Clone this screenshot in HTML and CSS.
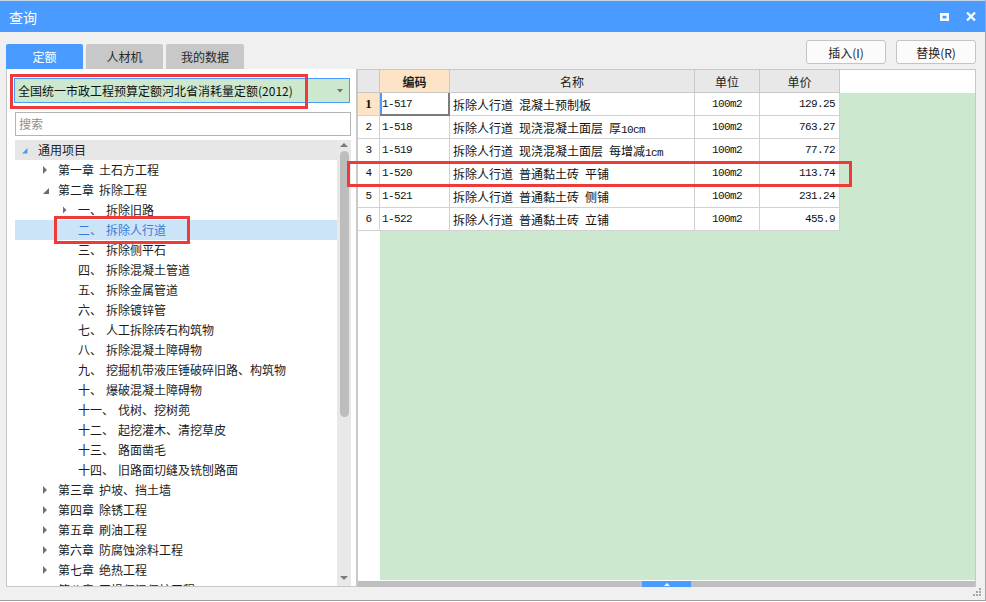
FILE: index.html
```html
<!DOCTYPE html>
<html lang="zh-CN">
<head>
<meta charset="utf-8">
<title>查询</title>
<link rel="stylesheet" href="styles.css">
</head>
<body>
<div class="window">
  <div class="titlebar">
    <span class="title">查询</span>
    <div class="title-btns">
      <svg width="9" height="8" viewBox="0 0 9 8"><path d="M0 0H9V8H0Z M2.5 2.7H6.5V5.5H2.5Z" fill="#fff" fill-rule="evenodd"/></svg>
      <svg width="10" height="9" viewBox="0 0 10 9"><path d="M1 0.5L9 8.5M9 0.5L1 8.5" stroke="#fff" stroke-width="2.2"/></svg>
    </div>
  </div>

  <div class="toolbar">
    <div class="tabs">
      <div class="tab active">定额</div>
      <div class="tab">人材机</div>
      <div class="tab wide">我的数据</div>
    </div>
    <div class="actions">
      <button class="btn">插入(I)</button>
      <button class="btn">替换(R)</button>
    </div>
  </div>

  <div class="main">
    <div class="left">
      <div class="combo">
        <span>全国统一市政工程预算定额河北省消耗量定额(2012)</span>
        <svg width="6" height="4" viewBox="0 0 6 4"><path d="M0 0H6L3 3.5Z" fill="#707070"/></svg>
      </div>
      <div class="search">搜索</div>
      <div class="tree">
        <div class="tree-list">
          <div class="node l0 root"><i class="arr"><svg width="16" height="20" viewBox="0 0 16 20"><path d="M0 13.5H5.5V8Z" fill="#4a9bff"/></svg></i>通用项目</div>
          <div class="node l1"><i class="arr"><svg width="16" height="20" viewBox="0 0 16 20"><path d="M1 6L5 10L1 14Z" fill="#727272"/></svg></i><span class="p">第一章</span>土石方工程</div>
          <div class="node l1"><i class="arr"><svg width="16" height="20" viewBox="0 0 16 20"><path d="M1 14H7V8Z" fill="#6a6a6a"/></svg></i><span class="p">第二章</span>拆除工程</div>
          <div class="node l2"><i class="arr"><svg width="16" height="20" viewBox="0 0 16 20"><path d="M1 6.5L4.5 10L1 13.5Z" fill="#727272"/></svg></i><span class="q">一、</span>拆除旧路</div>
          <div class="node l2 sel"><i class="arr"></i><span class="q">二、</span>拆除人行道</div>
          <div class="node l2"><i class="arr"></i><span class="q">三、</span>拆除侧平石</div>
          <div class="node l2"><i class="arr"></i><span class="q">四、</span>拆除混凝土管道</div>
          <div class="node l2"><i class="arr"></i><span class="q">五、</span>拆除金属管道</div>
          <div class="node l2"><i class="arr"></i><span class="q">六、</span>拆除镀锌管</div>
          <div class="node l2"><i class="arr"></i><span class="q">七、</span>人工拆除砖石构筑物</div>
          <div class="node l2"><i class="arr"></i><span class="q">八、</span>拆除混凝土障碍物</div>
          <div class="node l2"><i class="arr"></i><span class="q">九、</span>挖掘机带液压锤破碎旧路、构筑物</div>
          <div class="node l2"><i class="arr"></i><span class="q">十、</span>爆破混凝土障碍物</div>
          <div class="node l2"><i class="arr"></i><span class="q">十一、</span>伐树、挖树蔸</div>
          <div class="node l2"><i class="arr"></i><span class="q">十二、</span>起挖灌木、清挖草皮</div>
          <div class="node l2"><i class="arr"></i><span class="q">十三、</span>路面凿毛</div>
          <div class="node l2"><i class="arr"></i><span class="q">十四、</span>旧路面切缝及铣刨路面</div>
          <div class="node l1"><i class="arr"><svg width="16" height="20" viewBox="0 0 16 20"><path d="M1 6L5 10L1 14Z" fill="#727272"/></svg></i><span class="p">第三章</span>护坡、挡土墙</div>
          <div class="node l1"><i class="arr"><svg width="16" height="20" viewBox="0 0 16 20"><path d="M1 6L5 10L1 14Z" fill="#727272"/></svg></i><span class="p">第四章</span>除锈工程</div>
          <div class="node l1"><i class="arr"><svg width="16" height="20" viewBox="0 0 16 20"><path d="M1 6L5 10L1 14Z" fill="#727272"/></svg></i><span class="p">第五章</span>刷油工程</div>
          <div class="node l1"><i class="arr"><svg width="16" height="20" viewBox="0 0 16 20"><path d="M1 6L5 10L1 14Z" fill="#727272"/></svg></i><span class="p">第六章</span>防腐蚀涂料工程</div>
          <div class="node l1"><i class="arr"><svg width="16" height="20" viewBox="0 0 16 20"><path d="M1 6L5 10L1 14Z" fill="#727272"/></svg></i><span class="p">第七章</span>绝热工程</div>
          <div class="node l1"><i class="arr"><svg width="16" height="20" viewBox="0 0 16 20"><path d="M1 6L5 10L1 14Z" fill="#727272"/></svg></i><span class="p">第八章</span>王损保温保护工程</div>
        </div>
        <div class="vscroll">
          <div class="sarrow up"><svg width="8" height="4" viewBox="0 0 8 4"><path d="M0 4H8L4 0Z" fill="#7a7a7a"/></svg></div>
          <div class="vthumb"></div>
          <div class="vspace"></div>
          <div class="sarrow down"><svg width="8" height="4" viewBox="0 0 8 4"><path d="M0 0H8L4 4Z" fill="#7a7a7a"/></svg></div>
        </div>
      </div>
    </div>

    <div class="right">
      <div class="ghead">
        <div class="hc"></div>
        <div class="hc code">编码</div>
        <div class="hc">名称</div>
        <div class="hc">单位</div>
        <div class="hc">单价</div>
      </div>
      <div class="gbody">
        <div class="grow">
          <div class="c rn cur">1</div>
          <div class="c code-c focus m">1-517</div>
          <div class="c name"><span>拆除人行道&ensp;混凝土预制板</span></div>
          <div class="c unit m">100m2</div>
          <div class="c price m">129.25</div>
        </div>
        <div class="grow">
          <div class="c rn m">2</div>
          <div class="c code-c m">1-518</div>
          <div class="c name"><span>拆除人行道&ensp;现浇混凝土面层&ensp;厚<span class="m">10cm</span></span></div>
          <div class="c unit m">100m2</div>
          <div class="c price m">763.27</div>
        </div>
        <div class="grow">
          <div class="c rn m">3</div>
          <div class="c code-c m">1-519</div>
          <div class="c name"><span>拆除人行道&ensp;现浇混凝土面层&ensp;每增减<span class="m">1cm</span></span></div>
          <div class="c unit m">100m2</div>
          <div class="c price m">77.72</div>
        </div>
        <div class="grow">
          <div class="c rn m">4</div>
          <div class="c code-c m">1-520</div>
          <div class="c name"><span>拆除人行道&ensp;普通黏土砖&ensp;平铺</span></div>
          <div class="c unit m">100m2</div>
          <div class="c price m">113.74</div>
        </div>
        <div class="grow">
          <div class="c rn m">5</div>
          <div class="c code-c m">1-521</div>
          <div class="c name"><span>拆除人行道&ensp;普通黏土砖&ensp;侧铺</span></div>
          <div class="c unit m">100m2</div>
          <div class="c price m">231.24</div>
        </div>
        <div class="grow">
          <div class="c rn m">6</div>
          <div class="c code-c m">1-522</div>
          <div class="c name"><span>拆除人行道&ensp;普通黏土砖&ensp;立铺</span></div>
          <div class="c unit m">100m2</div>
          <div class="c price m">455.9</div>
        </div>
      </div>
      <div class="hgap"></div>
      <div class="hscroll">
        <div class="hthumb"><svg width="6" height="3" viewBox="0 0 6 3"><path d="M0 3H6L3 0Z" fill="#fff"/></svg></div>
      </div>
    </div>
  </div>

  <div class="mark mark-combo"></div>
  <div class="mark mark-node"></div>
  <div class="mark mark-row"></div>

  <svg class="grip" width="9" height="9" viewBox="0 0 9 9">
    <rect x="6" y="0" width="2" height="2" fill="#a6a6a6"/>
    <rect x="3" y="3" width="2" height="2" fill="#a6a6a6"/>
    <rect x="6" y="3" width="2" height="2" fill="#a6a6a6"/>
    <rect x="0" y="6" width="2" height="2" fill="#a6a6a6"/>
    <rect x="3" y="6" width="2" height="2" fill="#a6a6a6"/>
    <rect x="6" y="6" width="2" height="2" fill="#a6a6a6"/>
  </svg>
</div>
</body>
</html>
```

FILE: styles.css
```css
* {
  box-sizing: border-box;
  margin: 0;
  padding: 0;
}

html, body {
  width: 986px;
  height: 602px;
  overflow: hidden;
  background: #ffffff;
}

body {
  font-family: "Noto Sans CJK SC", "Microsoft YaHei", sans-serif;
  font-size: 12px;
  color: #1c1c1c;
}

.window {
  position: relative;
  width: 986px;
  height: 601px;
  background: #f0f0f0;
  border-right: 1px solid #a8a8a8;
  border-bottom: 1px solid #a0a0a0;
  display: flex;
  flex-direction: column;
}

/* title bar */
.titlebar {
  height: 32px;
  flex: none;
  background: #4a9bff;
  border-top: 1px solid #c9d7ea;
  display: flex;
  align-items: center;
  justify-content: space-between;
  padding: 0 9px 0 9px;
  color: #ffffff;
}

.title {
  font-size: 14px;
  line-height: 16px;
}

.title-btns {
  display: flex;
  align-items: center;
  gap: 17px;
}

.title-btns svg {
  display: block;
}

/* toolbar: tabs + buttons */
.toolbar {
  height: 37px;
  flex: none;
  display: flex;
  justify-content: space-between;
  padding: 0 9px 0 6px;
}

.tabs {
  display: flex;
  gap: 3px;
  align-self: flex-end;
}

.tab {
  width: 77px;
  height: 25px;
  background: #c8c8c8;
  color: #2a2a2a;
  display: flex;
  align-items: center;
  justify-content: center;
  border-radius: 2px 2px 0 0;
}

.tab.wide {
  width: 78px;
}

.tab.active {
  background: #4a9bff;
  color: #ffffff;
}

.actions {
  display: flex;
  gap: 10px;
  padding-top: 8px;
}

.btn {
  width: 80px;
  height: 24px;
  background: #fbfbfb;
  border: 1px solid #c4c4c4;
  border-radius: 3px;
  font-family: inherit;
  font-size: 12px;
  color: #222;
}

/* main area */
.main {
  height: 518px;
  flex: none;
  display: flex;
  padding-left: 6px;
}

.left {
  width: 351px;
  background: #ffffff;
  border-left: 1px solid #c8c8c8;
  border-right: 1px solid #c8c8c8;
  border-bottom: 1px solid #c8c8c8;
  display: flex;
  flex-direction: column;
}

.combo {
  margin: 9px 6px 0 7px;
  height: 25px;
  background: #cce8cf;
  border: 1px solid #4a9bff;
  display: flex;
  align-items: center;
  justify-content: space-between;
  padding: 0 6px 0 3px;
  color: #111;
  white-space: nowrap;
}

.combo svg {
  display: block;
}

.search {
  margin: 9px 5px 0 8px;
  height: 24px;
  border: 1px solid #b4b4b4;
  background: #ffffff;
  padding-left: 3px;
  line-height: 22px;
  color: #8e8e8e;
}

.tree {
  margin: 4px 5px 0 8px;
  flex: 1;
  min-height: 0;
  display: flex;
  overflow: hidden;
}

.tree-list {
  flex: 1;
  overflow: hidden;
}

.node {
  height: 20px;
  display: flex;
  align-items: center;
  white-space: nowrap;
  line-height: 20px;
}

.node.l0 { padding-left: 7px; }
.node.l1 { padding-left: 27px; }
.node.l2 { padding-left: 47px; }

.node.root {
  background: #e6e6e6;
}

.node.sel {
  background: #cce4f7;
  color: #3a7ad8;
}

.arr {
  width: 16px;
  height: 20px;
  flex: none;
  display: block;
}

.arr svg {
  display: block;
}

.p {
  margin-right: 5px;
}

.q {
  margin-right: 4px;
}

.vscroll {
  width: 14px;
  flex: none;
  background: #e8e8e8;
  display: flex;
  flex-direction: column;
  align-items: center;
}

.sarrow {
  flex: none;
  display: flex;
  justify-content: center;
}

.sarrow.up {
  height: 11px;
  padding-top: 3px;
}

.sarrow.down {
  height: 10px;
  padding-top: 0;
}

.sarrow svg {
  display: block;
}

.vthumb {
  width: 9px;
  height: 266px;
  background: #bdbdbd;
  border-radius: 5px;
  flex: none;
}

.vspace {
  flex: 1;
}

/* grid */
.right {
  width: 619px;
  background: #ffffff;
  border-top: 1px solid #c8c8c8;
  border-left: 1px solid #c8c8c8;
  border-right: 1px solid #c8c8c8;
  display: flex;
  flex-direction: column;
}

.ghead,
.grow {
  display: grid;
  grid-template-columns: 22px 70px 245px 65px 80px;
  height: 23px;
  flex: none;
}

.ghead {
  background: #ffffff;
}

.hc {
  background: #e8e8e8;
  border-right: 1px solid #c8c8c8;
  border-bottom: 1px solid #c8c8c8;
  display: flex;
  align-items: center;
  justify-content: center;
  color: #1c1c1c;
}

.hc.code {
  background: #fde4c6;
  font-weight: bold;
}

.gbody {
  flex: 1;
  min-height: 0;
  overflow: hidden;
  background: linear-gradient(90deg, #ffffff 22px, #cce8cf 22px);
}

.c {
  background: #ffffff;
  border-right: 1px solid #d2d2d2;
  border-bottom: 1px solid #d2d2d2;
  display: flex;
  align-items: center;
  white-space: nowrap;
  overflow: hidden;
  color: #111;
}

.m {
  font-family: "Liberation Mono", "DejaVu Sans Mono", monospace;
  font-size: 11px;
  letter-spacing: -0.6px;
}

.rn {
  justify-content: center;
}

.rn.cur {
  background: #fde4c6;
  font-family: "Liberation Serif", serif;
  font-weight: bold;
  font-size: 13px;
}

.code-c {
  padding-left: 2px;
}

.code-c.focus {
  border-right: 2px solid #7c7c7c;
  border-bottom: 2px solid #7c7c7c;
  box-shadow: inset 2px 0 0 #4a9bff;
}

.name {
  padding-left: 3px;
}

.unit {
  justify-content: center;
}

.price {
  justify-content: flex-end;
  padding-right: 4px;
}

.hgap {
  height: 1px;
  flex: none;
  background: #ffffff;
}

.hscroll {
  height: 6px;
  flex: none;
  background: #bebebe;
  display: flex;
}

.hthumb {
  margin-left: 284px;
  width: 49px;
  height: 6px;
  background: #4a9bff;
  display: flex;
  justify-content: center;
  align-items: center;
}

.hthumb svg {
  display: block;
}

/* red annotation boxes drawn over the UI */
.mark {
  position: absolute;
  border: 3px solid #ef3a3a;
  pointer-events: none;
}

.mark-combo {
  left: 10px;
  top: 74px;
  width: 298px;
  height: 35px;
}

.mark-node {
  left: 54px;
  top: 216px;
  width: 136px;
  height: 28px;
}

.mark-row {
  left: 347px;
  top: 161px;
  width: 505px;
  height: 26px;
}

.grip {
  position: absolute;
  right: 3px;
  bottom: 3px;
}
```
